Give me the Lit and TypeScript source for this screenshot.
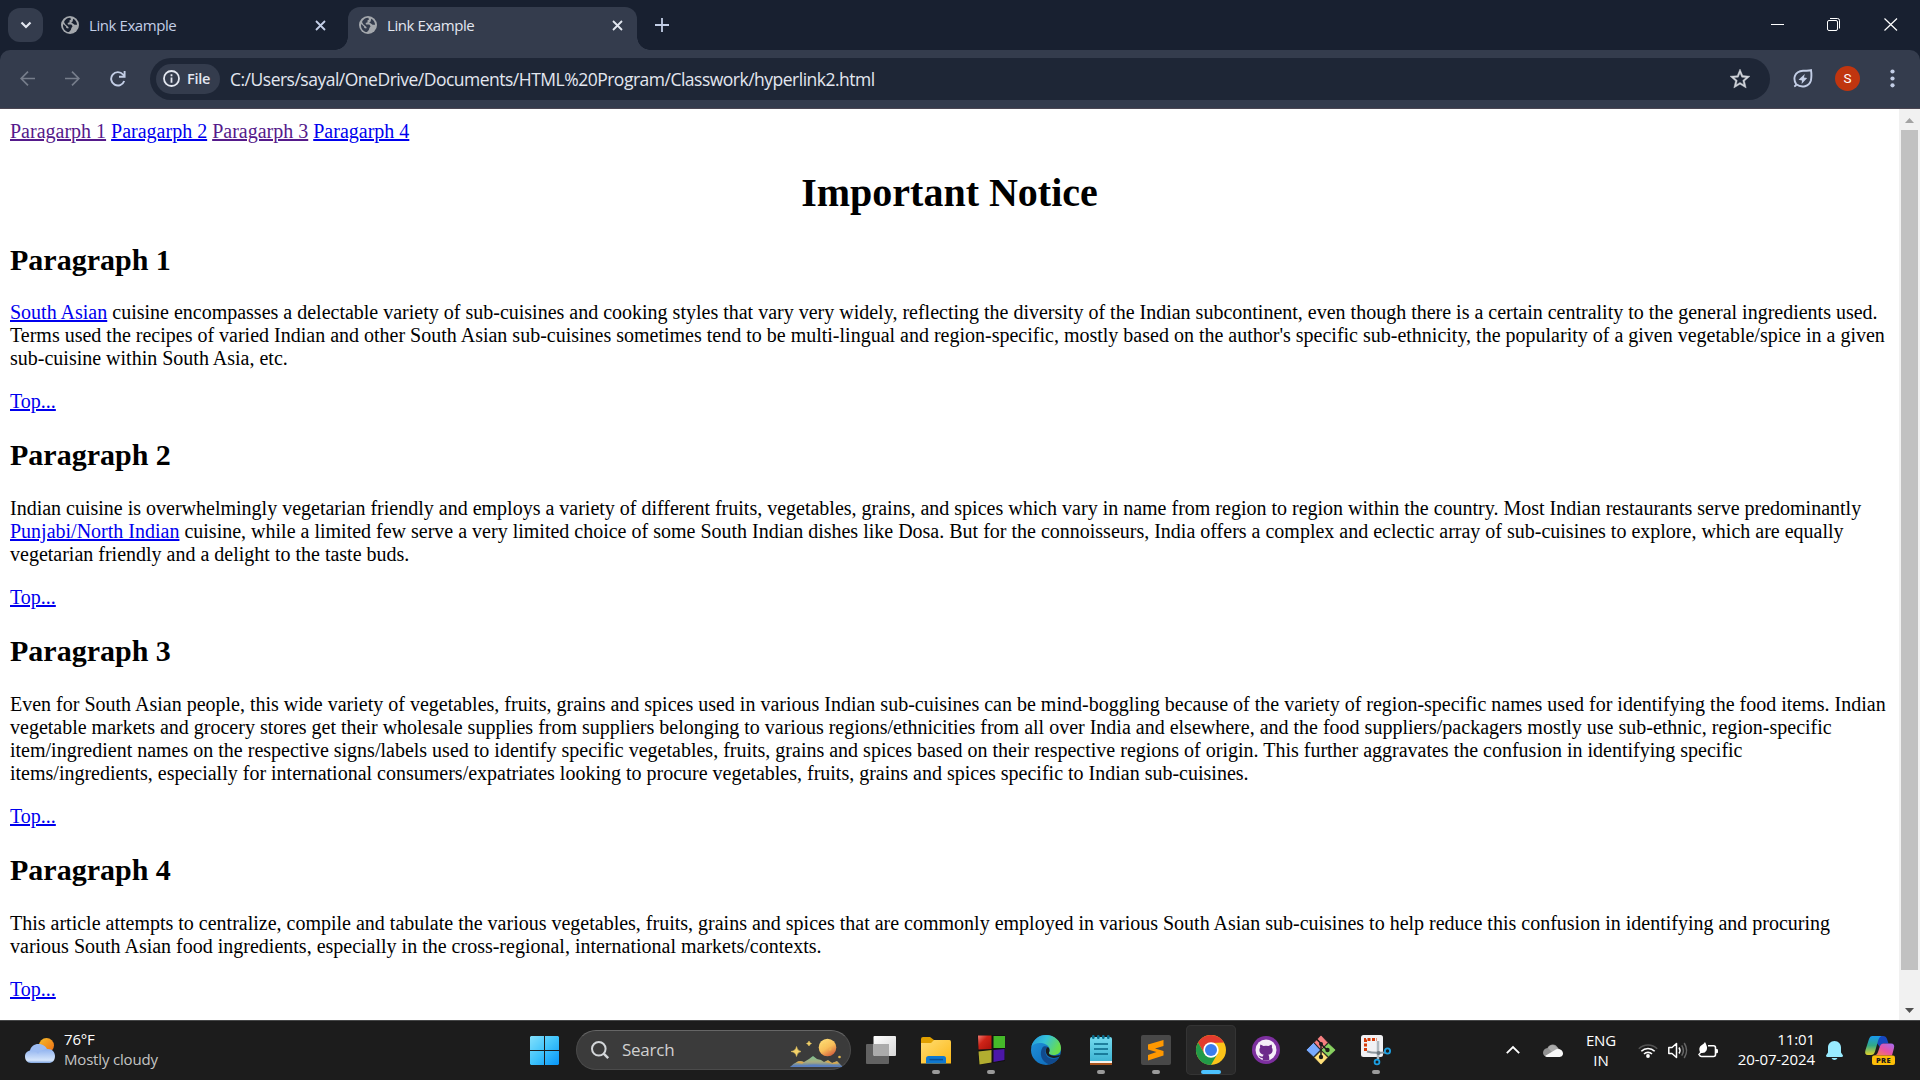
import { LitElement, html, css, svg } from "lit";
import { customElement, property } from "lit/decorators.js";
import { classMap } from "lit/directives/class-map.js";

const globe = html`<svg width="18" height="18" viewBox="0 0 18 18">
  <circle cx="9" cy="9" r="9" fill="#a4a8ad" />
  <path class="land" d="M7.2 1.9 9.3 1.8 10 3.6 8.4 4.6 8.6 6.2 6.6 7 7 8.4 10.4 8.5 11.6 10.2 10.4 12 9.8 14 8 16.1 C4.6 15.7 2 12.9 2 9.4 L2.2 8 5 10.4 5.3 12 7.3 12.6 7.6 11.2 6 9.7 4.2 8.2 3 6 C3.9 3.8 5.4 2.4 7.2 1.9Z M12.2 2.8 C14.5 4 16 6.3 16.1 8.8 L13.6 8.8 11.9 7.4 10.2 6.6 11.6 5.4Z" />
</svg>`;

const cross = html`<svg width="11" height="11" viewBox="0 0 11 11" fill="none" stroke="currentColor" stroke-width="1.8">
  <path d="M1 1 10 10M10 1 1 10" />
</svg>`;

@customElement("browser-tabs")
class BrowserTabs extends LitElement {
  static styles = css`
    :host { display: block; height: 50px; background: #182030; color: #c3cee6; }
    .strip { display: flex; height: 50px; padding-left: 8px; box-sizing: border-box; }
    .list { width: 35px; height: 34px; margin-top: 8px; border-radius: 12px; background: #343c4d; display: flex; align-items: center; justify-content: center; }
    .tab { position: relative; display: flex; align-items: center; height: 36px; margin-top: 7px; box-sizing: border-box; --land: #182030; }
    .land { fill: var(--land); }
    .first { width: 287px; margin-left: 5px; padding-left: 13px; padding-right: 9px; }
    .active { width: 289px; height: 43px; margin-left: 13px; padding: 0 14px 7px 11px; background: #343c4d; color: #e3e7f0; border-radius: 12px 12px 0 0; --land: #343c4d; }
    .active::before, .active::after { content: ""; position: absolute; bottom: 0; width: 13px; height: 13px; }
    .active::before { left: -13px; background: radial-gradient(circle at 0 0, transparent 12.5px, #343c4d 13px); }
    .active::after { right: -13px; background: radial-gradient(circle at 100% 0, transparent 12.5px, #343c4d 13px); }
    .title { flex: 1; margin-left: 10px; font: 15px/20px "Open Sans", sans-serif; letter-spacing: -0.42px; }
    .plus { width: 14px; height: 14px; margin: 18px 0 0 18px; }
    .windows { display: flex; margin-left: auto; padding: 18px 22px 0 0; gap: 43px; color: #fff; }
    .windows svg { display: block; }
    .windows .quit { margin-left: 1px; }
  `;
  render() {
    return html`<div class="strip">
      <div class="list">
        <svg width="12" height="8" viewBox="0 0 12 8" fill="none" stroke="#e3e7f0" stroke-width="2.2"><path d="M1.5 1.5 6 6 10.500 1.500" /></svg>
      </div>
      <div class="tab first">${globe}<span class="title">Link Example</span>${cross}</div>
      <div class="tab active">${globe}<span class="title">Link Example</span>${cross}</div>
      <svg class="plus" viewBox="0 0 14 14" stroke="currentColor" stroke-width="1.8"><path d="M7 0V14M0 7H14" /></svg>
      <div class="windows">
        <svg width="13" height="13" stroke="currentColor"><path d="M0 6.500H13" /></svg>
        <svg width="13" height="13" fill="none" stroke="currentColor"><rect x=".5" y="2.500" width="10" height="10" rx="1.500" /><path d="M3 .5H10.500Q12.500 .5 12.500 2.500V10.500" /></svg>
        <svg class="quit" width="14" height="13" fill="none" stroke="currentColor" stroke-width="1.200"><path d="M.5 .5 13 12.500M13 .5 .5 12.500" /></svg>
      </div>
    </div>`;
  }
}

@customElement("browser-toolbar")
class BrowserToolbar extends LitElement {
  static styles = css`
    :host { display: block; height: 59px; background: #182030; }
    .bar { display: flex; align-items: center; height: 59px; box-sizing: border-box; padding: 0 24px 1px 20px; background: #343c4d; border-radius: 10px 10px 0 0; border-bottom: 1px solid #4b4652; color: #c3cee6; }
    svg { display: block; flex: none; }
    .nav { display: flex; gap: 30px; width: 130px; align-items: center; }
    .dim { color: #767d8b; }
    .box { display: flex; align-items: center; box-sizing: border-box; width: 1620px; height: 42px; padding: 0 20px 0 6px; border-radius: 21px; background: #1e2636; }
    .chip { display: flex; align-items: center; box-sizing: border-box; width: 64px; height: 30px; padding-left: 7px; gap: 7px; border-radius: 15px; background: #343c4d; color: #e3e7f0; font: 600 14.5px/20px "Open Sans", sans-serif; letter-spacing: -0.3px; }
    .url { flex: 1; margin-left: 10px; color: #e3e7f0; font: 17.5px/24px "Open Sans", sans-serif; letter-spacing: -0.5px; white-space: nowrap; }
    .star { color: #d0d3da; }
    .leaf { margin-left: 23px; }
    .avatar { width: 25px; height: 25px; margin-left: 22px; border-radius: 50%; background: #c0350f; color: #fff; font: 13.5px/25px Roboto, sans-serif; text-align: center; }
    .menu { margin-left: auto; margin-right: 1px; }
  `;
  render() {
    return html`<div class="bar">
      <div class="nav">
        <svg class="dim" width="15" height="15" viewBox="0 0 15 15" fill="none" stroke="currentColor" stroke-width="1.700"><path d="M15 7.500H1.500M8 .7 1.200 7.500 8 14.300" /></svg>
        <svg class="dim" width="15" height="15" viewBox="0 0 15 15" fill="none" stroke="currentColor" stroke-width="1.700"><path d="M0 7.500H13.500M7 .7 13.800 7.500 7 14.300" /></svg>
        <svg width="16" height="16" viewBox="0 0 16 16" fill="none" stroke="currentColor" stroke-width="1.900"><path d="M14.200 10A6.700 6.700 0 1 1 13 3.500L14.500 5.200M14.600 0V5.700H9" /></svg>
      </div>
      <div class="box">
        <div class="chip">
          <svg width="17" height="17" viewBox="0 0 17 17" fill="none" stroke="currentColor" stroke-width="1.800"><circle cx="8.500" cy="8.500" r="7.500" /><path d="M8.500 7.500V12.700M8.500 4.300V6.200" /></svg>
          <span>File</span>
        </div>
        <span class="url">C:/Users/sayal/OneDrive/Documents/HTML%20Program/Classwork/hyperlink2.html</span>
        <svg class="star" width="20" height="20" viewBox="2 2 20 20" fill="currentColor" stroke="currentColor" stroke-width=".4"><path d="M22 9.240l-7.190-.620L12 2 9.190 8.630 2 9.240l5.460 4.730L5.820 21 12 17.270 18.180 21l-1.630-7.030L22 9.240zM12 15.400l-3.760 2.270 1-4.280-3.320-2.880 4.380-.380L12 6.100l1.710 4.040 4.380.380-3.320 2.880 1 4.280L12 15.400z" /></svg>
      </div>
      <svg class="leaf" width="20" height="20" viewBox="0 0 20 20" fill="none" stroke="currentColor" stroke-width="1.900"><path d="M1.200 17.500C2.600 16.900 3 16.200 3.400 15.500M3.200 15.300C-.4 9.500 1.500 2.500 10 1.800 13 1.500 16 2 18 1.200 18.600 5 18.500 8.500 17.900 11.500 16.300 17.500 8.800 19.500 3.200 15.300Z" /><path fill="currentColor" stroke="none" d="M11.800 5 5.500 10.800 9 11.400 8.600 15 14.200 9 10.900 8.400Z" /></svg>
      <div class="avatar">S</div>
      <svg class="menu" width="5" height="19" fill="currentColor"><circle cx="2.500" cy="2.500" r="2.100" /><circle cx="2.500" cy="9.500" r="2.100" /><circle cx="2.500" cy="16.300" r="2.100" /></svg>
    </div>`;
  }
}

@customElement("notice-page")
class NoticePage extends LitElement {
  static styles = css`
    :host { display: flex; height: 911px; background: #fff; color: #000; font: 20px/23px "Liberation Serif", serif; }
    .body { flex: 1; padding: 11px 10px 10px; overflow: hidden; box-sizing: border-box; }
    h1 { margin: 27px 0; font-size: 40px; line-height: 46px; text-align: center; }
    h2 { margin: 25px 0; font-size: 30px; line-height: 34px; }
    h1 + h2 { margin-bottom: 24px; }
    p { margin: 20px 0; }
    a { color: #0000ee; text-decoration: underline; }
    .seen { color: #551a8b; }
    .scroll { display: flex; flex-direction: column; align-items: center; width: 21px; box-sizing: border-box; padding: 9px 0 7px; background: #f1f1f1; }
    .scroll svg { display: block; flex: none; }
    .thumb { width: 17px; height: 840px; margin-top: 7px; background: #c1c1c1; }
    .down { margin-top: auto; }
  `;
  render() {
    const top = html`<p><a>Top...</a></p>`;
    return html`<div class="body">
        <a class="seen">Paragarph 1</a> <a>Paragarph 2</a> <a class="seen">Paragarph 3</a> <a>Paragarph 4</a>
        <h1>Important Notice</h1>
        <h2>Paragraph 1</h2>
        <p><a>South Asian</a> cuisine encompasses a delectable variety of sub-cuisines and cooking styles that vary very widely, reflecting the diversity of the Indian subcontinent, even though there is a certain centrality to the general ingredients used. Terms used the recipes of varied Indian and other South Asian sub-cuisines sometimes tend to be multi-lingual and region-specific, mostly based on the author's specific sub-ethnicity, the popularity of a given vegetable/spice in a given sub-cuisine within South Asia, etc.</p>
        ${top}
        <h2>Paragraph 2</h2>
        <p>Indian cuisine is overwhelmingly vegetarian friendly and employs a variety of different fruits, vegetables, grains, and spices which vary in name from region to region within the country. Most Indian restaurants serve predominantly <a>Punjabi/North Indian</a> cuisine, while a limited few serve a very limited choice of some South Indian dishes like Dosa. But for the connoisseurs, India offers a complex and eclectic array of sub-cuisines to explore, which are equally vegetarian friendly and a delight to the taste buds.</p>
        ${top}
        <h2>Paragraph 3</h2>
        <p>Even for South Asian people, this wide variety of vegetables, fruits, grains and spices used in various Indian sub-cuisines can be mind-boggling because of the variety of region-specific names used for identifying the food items. Indian vegetable markets and grocery stores get their wholesale supplies from suppliers belonging to various regions/ethnicities from all over India and elsewhere, and the food suppliers/packagers mostly use sub-ethnic, region-specific item/ingredient names on the respective signs/labels used to identify specific vegetables, fruits, grains and spices based on their respective regions of origin. This further aggravates the confusion in identifying specific items/ingredients, especially for international consumers/expatriates looking to procure vegetables, fruits, grains and spices specific to Indian sub-cuisines.</p>
        ${top}
        <h2>Paragraph 4</h2>
        <p>This article attempts to centralize, compile and tabulate the various vegetables, fruits, grains and spices that are commonly employed in various South Asian sub-cuisines to help reduce this confusion in identifying and procuring various South Asian food ingredients, especially in the cross-regional, international markets/contexts.</p>
        ${top}
      </div>
      <div class="scroll">
        <svg width="9" height="5"><path d="M0 5 4.500 0 9 5Z" fill="#a3a3a3" /></svg>
        <div class="thumb"></div>
        <svg class="down" width="9" height="5"><path d="M0 0 4.500 5 9 0Z" fill="#505050" /></svg>
      </div>`;
  }
}

const apps = [
  { name: "explorer", open: true, art: svg`<path d="M0 4Q0 2 2 2H9L13 5H28V14H0Z" fill="#e0a000"/><path d="M0 8H10L13 5H28.500Q30 5 30 7V28.500H0Z" fill="url(#folder)"/><path d="M5 28.500V23.500Q5 21 7.500 21H22.500Q25 21 25 23.500V28.500Z" fill="#0f78cf"/><path d="M8.500 24.600H22" stroke="#0a4f94" stroke-width="1.500"/>` },
  { name: "panes", open: true, art: svg`<path d="M1.500 0H29V26L3 30Z" fill="#111"/><path d="M2 .5H15.500V14L2.500 14.500Z" fill="url(#redpane)"/><path d="M17.500 1H29V13H17.500Z" fill="#45b92a"/><path d="M2.500 16.500 15.500 15V27.500L3.500 29.500Z" fill="#b2ad30"/><path d="M17.500 15 28.500 14V25L17.500 27Z" fill="#4b17a8"/>` },
  { name: "edge", open: false, art: svg`<circle cx="15" cy="15" r="15" fill="url(#edgeblue)"/><path d="M.3 12C2 4.500 8 0 15 0 23.500 0 30 6 30 13 30 17.500 27 20 22.500 20 19 20 17.500 18.800 18 17.500 19.500 15 18.800 11.500 15 9.500 9 6.500 2.500 8.500 .3 12Z" fill="url(#edgegreen)"/><path d="M11.500 12.500C8 18 10 27 18.500 29.500 22 28.800 26 26 28 22.500 22 25.500 14 23.500 14.500 16 14.600 13.800 16 12.500 17 12 15 11 12.500 11 11.500 12.500Z" fill="#114a8d"/><path d="M17 12C14.500 13 14 17.500 16.500 20.500 19.500 23.500 25 23.500 28.500 21.500L29 20C24 21.500 17 20.500 18 17.500 19 16 18.800 13.500 17 12Z" fill="#1c1c1c"/>` },
  { name: "notepad", open: true, art: svg`<path d="M4 25H26V30H4Z" fill="#a8531c"/><path d="M4 23H26V28H4Z" fill="#f5f0ea"/><path d="M4 4Q4 2 6 2H24Q26 2 26 4V26H4Z" fill="url(#note)"/><path d="M8 9H22M8 14H22M8 19H22" stroke="#096587" stroke-width="1.700"/><g fill="#0b6f90"><rect x="6" y="0" width="2.600" height="4" rx="1.300"/><rect x="11" y="0" width="2.600" height="4" rx="1.300"/><rect x="16" y="0" width="2.600" height="4" rx="1.300"/><rect x="21" y="0" width="2.600" height="4" rx="1.300"/></g>` },
  { name: "sublime", open: true, art: svg`<rect width="30" height="30" rx="2" fill="#484848"/><path d="M7 9.500 22.500 5V11L14 13.500 22.500 16V20.500L7 25.500V20L15.500 17 7 14.500Z" fill="#ff9800"/>` },
  { name: "chrome", open: true, current: true, art: svg`<circle cx="15" cy="15" r="15" fill="#fcc419"/><path d="M2 7.500A15 15 0 0 1 28 7.500L15 8 8.500 18.700Z" fill="#e33b2e"/><path d="M2 7.500A15 15 0 0 0 15 30L21.500 18.700 15 21 8.500 18.700Z" fill="#229a48"/><circle cx="15" cy="15" r="7.700" fill="#fff"/><circle cx="15" cy="15" r="6" fill="#3b7ded"/>` },
  { name: "github", open: false, art: svg`<circle cx="15" cy="15" r="14" fill="#7d2f9f"/><circle cx="15" cy="15" r="10.500" fill="#f5eef8"/><path d="M9.500 9.500 12.500 11Q15 10.300 17.500 11L20.500 9.500Q21.300 11.300 20.800 12.500C23 16 20.500 19.300 17.300 19.800 18.500 21 18.200 23 18.300 25L15 25.500 11.700 25V23C9.500 23.500 8.800 22 7.500 20.500 9.500 20.500 9.500 22 11.800 21.500Q12 20.300 12.700 19.800C9.500 19.300 7 16 9.200 12.500Q8.700 11 9.500 9.500Z" fill="#6c2a8b"/>` },
  { name: "git", open: false, art: svg`<g stroke="#1c1c1c" stroke-width=".8"><path d="M15 0 22 7.500 15 15 8 7.500Z" fill="#f57f80"/><path d="M7.500 7.500 14.500 15 7.500 22 0 15Z" fill="#78aaff"/><path d="M22.500 8 30 15 22.500 22 15 15Z" fill="#88d060"/><path d="M15 15.500 22 22.500 15 30 8 22.500Z" fill="#ffe07a"/></g><path d="M10 3.500 15 8.500V22M15 9 21 15" stroke="#1c1c1c" stroke-width="1.500" fill="none"/><g fill="#1c1c1c"><circle cx="15" cy="9" r="2"/><circle cx="21.500" cy="15" r="2.200"/><circle cx="15" cy="22" r="2.200"/></g>` },
  { name: "snip", open: true, art: svg`<rect width="22" height="22" rx="2.500" fill="#f1f1f4"/><path d="M4.500 16V4.500H16" fill="none" stroke="#d63b08" stroke-width="3" stroke-dasharray="3 1.500"/><path d="M6 16.500Q12 18.500 24 17.500" stroke="#8f989f" stroke-width="2" fill="none"/><path d="M17 6V24" stroke="#aeb7be" stroke-width="2.500"/><circle cx="17.500" cy="18" r="2" fill="#6d777f"/><circle cx="26.500" cy="16" r="2.600" fill="none" stroke="#1ca0e3" stroke-width="1.800"/><circle cx="16" cy="27" r="2.400" fill="none" stroke="#1ca0e3" stroke-width="1.800"/>` },
];

const gradients = svg`<defs>
  <linearGradient id="folder" x2="1" y2="1"><stop stop-color="#ffdc72"/><stop offset="1" stop-color="#fcb816"/></linearGradient>
  <linearGradient id="redpane" x2="1" y2="1"><stop stop-color="#f07a70"/><stop offset=".4" stop-color="#cf2418"/><stop offset="1" stop-color="#a8120b"/></linearGradient>
  <linearGradient id="edgeblue" x1="0" y1="0" x2="1" y2="1"><stop stop-color="#2296dd"/><stop offset="1" stop-color="#0a63b5"/></linearGradient>
  <linearGradient id="edgegreen" x2="1" y2=".4"><stop stop-color="#2093dc"/><stop offset=".5" stop-color="#35c2d8"/><stop offset="1" stop-color="#68dc4f"/></linearGradient>
  <linearGradient id="note" x2="0" y2="1"><stop stop-color="#74daee"/><stop offset="1" stop-color="#3fb5d4"/></linearGradient>
</defs>`;

@customElement("task-app")
class TaskApp extends LitElement {
  @property({ attribute: false }) app: any;
  static styles = css`
    .cell { display: grid; grid-template-rows: 10px 30px 5px 4px; justify-items: center; width: 50px; height: 50px; box-sizing: border-box; border-radius: 5px; }
    .current { background: #292929; box-shadow: inset 0 0 0 1px #343434; }
    svg { grid-row: 2; display: block; overflow: visible; }
    .mark { grid-row: 4; width: 8px; border-radius: 2px; background: #9a9a9a; }
    .current .mark { width: 20px; background: #4cc2ff; }
  `;
  render() {
    const { art, open, current } = this.app;
    return html`<div class=${classMap({ cell: true, current: !!current })}>
      <svg width="30" height="30" viewBox="0 0 30 30">${gradients}${art}</svg>
      ${open ? html`<span class="mark"></span>` : ""}
    </div>`;
  }
}

@customElement("task-bar")
class TaskBar extends LitElement {
  static styles = css`
    :host { display: block; height: 60px; background: #1c1c1c; color: #fff; font: 15px/20px "Open Sans", sans-serif; letter-spacing: -0.1px; }
    .bar { display: flex; align-items: center; height: 60px; box-sizing: border-box; border-top: 1px solid #454647; padding-bottom: 1px; }
    svg { display: block; flex: none; overflow: visible; }
    .weather { display: flex; align-items: center; width: 505px; padding-left: 25px; box-sizing: border-box; gap: 9px; }
    .report { padding-bottom: 2px; letter-spacing: -0.18px; }
    .sub { color: #c4c4c4; }
    .start { margin-left: 25px; }
    .search { display: flex; align-items: center; width: 275px; height: 40px; margin-left: 17px; padding: 0 8px 0 14px; box-sizing: border-box; border-radius: 20px; background: #3b3b3b; border: 1px solid #4b4b4b; border-top-color: #666; }
    .label { flex: 1; margin-left: 13px; color: #d0d0d0; font-size: 17px; letter-spacing: -0.25px; }
    .art { align-self: flex-end; margin-bottom: 2px; }
    .views { margin-left: 15px; }
    .apps { display: flex; gap: 5px; margin-left: 15px; }
    .tray { display: flex; align-items: center; margin-left: auto; padding-right: 25px; }
    .lang { width: 40px; margin-left: 18px; text-align: center; }
    .wifi { margin-left: 17px; }
    .sound { margin-left: 10px; }
    .power { margin-left: 10px; }
    .clock { width: 78px; margin-left: 19px; padding-bottom: 2px; text-align: right; letter-spacing: -0.1px; white-space: nowrap; }
    .bell { margin-left: 11px; }
    .pilot { margin-left: 22px; }
    .pre { font: 800 7.500px "Open Sans", sans-serif; letter-spacing: 0.3px; }
    .cloud { margin-left: 23px; }
  `;
  render() {
    return html`<div class="bar">
      <div class="weather">
        <svg width="30" height="25" viewBox="0 0 30 25">
          <defs>
            <linearGradient id="sun" x2="1" y2="1"><stop stop-color="#f5bd2c" /><stop offset="1" stop-color="#ed6b12" /></linearGradient>
            <linearGradient id="mist" x2="0" y2="1"><stop stop-color="#8fb2ef" /><stop offset=".8" stop-color="#d5e5fb" /><stop offset="1" stop-color="#7ba2df" /></linearGradient>
          </defs>
          <circle cx="21.500" cy="7.500" r="7.500" fill="url(#sun)" />
          <path d="M5 12.500C6 8.500 9 6 13.500 6 18 6 21 8.500 22.500 12H20V20H5Z" fill="#9dbcf2" />
          <path d="M6 25C2 25 0 22 0 18.500 0 15 2.500 12.500 6 12.500 9 12.500 12 14 13 16 15 12.500 19 11 23 11 27.500 11 30 14.500 30 18 30 22.500 27.500 25 23.500 25Z" fill="url(#mist)" />
        </svg>
        <div class="report"><div>76°F</div><div class="sub">Mostly cloudy</div></div>
      </div>
      <svg class="start" width="29" height="29" viewBox="0 0 29 29">
        <defs><linearGradient id="win" gradientUnits="userSpaceOnUse" x2="29" y2="29"><stop stop-color="#83e0fb" /><stop offset=".5" stop-color="#3fc3fb" /><stop offset="1" stop-color="#0795f7" /></linearGradient></defs>
        <path d="M1 0H14V14H0V1ZM15 0H28L29 1V14H15ZM0 15H14V29H1L0 28ZM15 15H29V28L28 29H15Z" fill="url(#win)" />
      </svg>
      <div class="search">
        <svg width="18" height="18" viewBox="0 0 18 18" fill="none" stroke="#d3d6d9" stroke-width="2"><circle cx="7.800" cy="7.800" r="6.800" /><path d="M12.700 12.700 17.200 17.200" stroke-width="2.500" /></svg>
        <span class="label">Search</span>
        <svg class="art" width="52" height="28" viewBox="0 0 52 28">
          <defs>
            <linearGradient id="moon" x2=".6" y2="1"><stop stop-color="#ffe37c" /><stop offset=".6" stop-color="#f8bf59" /><stop offset="1" stop-color="#d8683f" /></linearGradient>
            <linearGradient id="hill" x2="0" y2="1"><stop stop-color="#7dc591" /><stop offset=".55" stop-color="#a7aa82" /><stop offset="1" stop-color="#4e74b9" /></linearGradient>
          </defs>
          <path d="M0 28Q4 24 7 23 10 21 14 23L19 20 23 17 27 20 31 21 34 23 38 21 42 24 47 22 52 27V28Z" fill="url(#hill)" />
          <path d="M6 23.500Q10 21 14 23.500L16 22.500 12 24.800ZM35 23 38 21.500 42 24 47 22.500 49 24.500 43 25Z" fill="#d9a74d" />
          <path d="M0 28Q6 25 14 26.500 24 24.500 34 26.500 44 25.500 52 28Z" fill="#5a7fc0" />
          <circle cx="37.500" cy="8.500" r="8.800" fill="url(#moon)" />
          <circle cx="34" cy="6" r="1.500" fill="#f6cd62" /><circle cx="40" cy="10" r="1.500" fill="#f0b252" />
          <path d="M6.500 7.500Q7.200 11.800 11 12.500 7.200 13.200 6.500 17.500 5.800 13.200 1 12.500 5.800 11.800 6.500 7.500ZM19 2Q19.500 4.200 21.500 4.500 19.500 5 19 7 18.500 5 16.500 4.500 18.500 4.200 19 2Z" fill="#f5d269" stroke="#f5d269" stroke-width=".5" />
          <circle cx="49.500" cy="18" r="1.300" fill="#e4b94d" />
        </svg>
      </div>
      <svg class="views" width="30" height="28" viewBox="0 0 30 28">
        <defs><linearGradient id="pane" x2="1" y2="1"><stop stop-color="#fff" /><stop offset="1" stop-color="#d6d6d6" /></linearGradient></defs>
        <rect y="8" width="23" height="20" rx="1" fill="#626262" /><rect x="7.500" width="22.500" height="20" rx="1" fill="url(#pane)" /><path d="M7.500 8H23V20H8.500L7.500 19Z" fill="#ababab" />
      </svg>
      <div class="apps">${apps.map((app) => html`<task-app .app=${app}></task-app>`)}</div>
      <div class="tray">
        <svg width="14" height="8" fill="none" stroke="#fff" stroke-width="1.800"><path d="M.8 7.200 7 1 13.200 7.200" /></svg>
        <svg class="cloud" width="20" height="13" viewBox="0 0 20 13">
          <path d="M0 9C0 6 2 4.500 4.500 4 6 0 12.500-1.500 15 4L8 12.500H4Q.5 12.500 0 9Z" fill="#919191" />
          <path d="M5 4Q8-.5 12 2L19 7 10 9Z" fill="#aaa" />
          <path d="M2 12 12 6C14 4 19.500 5 20 9 20.200 12 18 13 16 13H4Q3 13 2 12Z" fill="#f7f7f7" />
        </svg>
        <div class="lang"><div>ENG</div><div>IN</div></div>
        <svg class="wifi" width="20" height="15" viewBox="0 0 20 15" fill="none" stroke="#fff" stroke-width="1.600"><path d="M.8 5.800A13 13 0 0 1 19.200 5.800" stroke="#535353" /><path d="M3.300 8.300A9.500 9.500 0 0 1 16.700 8.300M6 11A5.700 5.700 0 0 1 14 11" /><circle cx="10" cy="13" r="1.900" fill="#fff" stroke="none" /></svg>
        <svg class="sound" width="20" height="17" viewBox="0 0 20 17" fill="none" stroke="#fff" stroke-width="1.500"><path d="M.8 5.500H4L8.500 1.500V15.500L4 11.500H.8Z" stroke-linejoin="round" /><path d="M11 5.500Q13 8.500 11 11.500" /><path d="M13.700 3.300Q17 8.500 13.700 13.700M16.200 1Q21 8.500 16.200 16" stroke="#666" /></svg>
        <svg class="power" width="20" height="17" viewBox="0 0 20 17"><path d="M10 3.800H15.500Q17.500 3.800 17.500 5.800V12.500Q17.500 14.500 15.500 14.500H3.500Q2 14.500 1.500 13" fill="none" stroke="#fff" stroke-width="1.600" /><path d="M18 7H18.700Q20 7 20 8.200V10Q20 11.200 18.700 11.200H18Z" fill="#fff" /><path d="M7 0Q10 5 8.500 8.500 7 11.500 3 11L1 13.500 0 12.500 2 10.200Q0 5.500 3.500 3.200 6 2 7 0Z" fill="#fff" /></svg>
        <div class="clock"><div>11:01</div><div>20-07-2024</div></div>
        <svg class="bell" width="17" height="19" viewBox="0 0 17 19" fill="#99ebff"><path d="M8.500 0C12.500 0 15 3 15 6.500V11.500L17 14.500Q17 16 15.500 16H1.500Q0 16 0 14.500L2 11.500V6.500C2 3 4.500 0 8.500 0ZM5.500 17H11.500Q10.500 19 8.500 19 6.500 19 5.500 17Z" /></svg>
        <svg class="pilot" width="30" height="29" viewBox="0 0 30 29">
          <defs>
            <linearGradient id="cool" x2="0" y2="1"><stop stop-color="#189af0" /><stop offset=".5" stop-color="#32a986" /><stop offset="1" stop-color="#e2d32a" /></linearGradient>
            <linearGradient id="warm" x1="1" x2="0" y2="1"><stop stop-color="#a06cf3" /><stop offset=".5" stop-color="#e753a4" /><stop offset="1" stop-color="#fa8b44" /></linearGradient>
          </defs>
          <path d="M12 0H18Q21 0 22 3L23.500 7.500H19Q16 7.500 14.800 11L11 6Z" fill="#1648c0" />
          <path d="M7 0H16.500Q14 1 13 5L10 15.500Q9 19 6 19H3Q-1 19 .5 14L4 3Q5 0 7 0Z" fill="url(#cool)" />
          <path d="M18 7.500H26Q30 7.500 29 12L27 19.500H8Q12 19.500 13 16L15 10Q16 7.500 18 7.500Z" fill="url(#warm)" />
          <rect x="7" y="19.500" width="23" height="9.500" rx="2" fill="#fdbe08" />
          <text class="pre" x="18.500" y="27" text-anchor="middle" fill="#1c1c1c">PRE</text>
        </svg>
      </div>
    </div>`;
  }
}

@customElement("app-root")
class AppRoot extends LitElement {
  static styles = css`
    :host { display: block; width: 1920px; height: 1080px; overflow: hidden; }
  `;
  render() {
    return html`<browser-tabs></browser-tabs><browser-toolbar></browser-toolbar><notice-page></notice-page><task-bar></task-bar>`;
  }
}
